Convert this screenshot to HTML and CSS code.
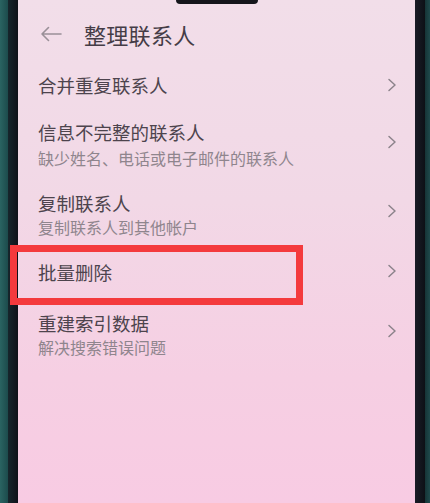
FILE: index.html
```html
<!DOCTYPE html>
<html lang="zh-CN">
<head>
<meta charset="utf-8">
<title>整理联系人</title>
<link rel="stylesheet" href="styles.css">
</head>
<body>
<div class="phone">
  <div class="bezel-left"><div class="edge-teal"></div><div class="edge-dark"></div></div>
  <div class="screen">
    <div class="notch"></div>
    <div class="header">
      <svg class="back" viewBox="0 0 22 16" width="22" height="16"><path d="M21 8H2M8.5 1.5L2 8l6.5 6.5" fill="none" stroke="#9a9098" stroke-width="1.6" stroke-linecap="round" stroke-linejoin="round"/></svg>
      <span class="title">整理联系人</span>
    </div>
    <div class="row r1">
      <div class="texts"><div class="name">合并重复联系人</div></div>
      <svg class="chev" viewBox="0 0 10 14" width="10" height="14"><path d="M2 1.5L8 7l-6 5.5" fill="none" stroke="#8c838b" stroke-width="1.5" stroke-linecap="round" stroke-linejoin="round"/></svg>
    </div>
    <div class="row r2">
      <div class="texts"><div class="name">信息不完整的联系人</div><div class="sub">缺少姓名、电话或电子邮件的联系人</div></div>
      <svg class="chev" viewBox="0 0 10 14" width="10" height="14"><path d="M2 1.5L8 7l-6 5.5" fill="none" stroke="#8c838b" stroke-width="1.5" stroke-linecap="round" stroke-linejoin="round"/></svg>
    </div>
    <div class="row r3">
      <div class="texts"><div class="name">复制联系人</div><div class="sub">复制联系人到其他帐户</div></div>
      <svg class="chev" viewBox="0 0 10 14" width="10" height="14"><path d="M2 1.5L8 7l-6 5.5" fill="none" stroke="#8c838b" stroke-width="1.5" stroke-linecap="round" stroke-linejoin="round"/></svg>
    </div>
    <div class="row r4">
      <div class="highlight"></div>
      <div class="texts"><div class="name">批量删除</div></div>
      <svg class="chev" viewBox="0 0 10 14" width="10" height="14"><path d="M2 1.5L8 7l-6 5.5" fill="none" stroke="#8c838b" stroke-width="1.5" stroke-linecap="round" stroke-linejoin="round"/></svg>
    </div>
    <div class="row r5">
      <div class="texts"><div class="name">重建索引数据</div><div class="sub">解决搜索错误问题</div></div>
      <svg class="chev" viewBox="0 0 10 14" width="10" height="14"><path d="M2 1.5L8 7l-6 5.5" fill="none" stroke="#8c838b" stroke-width="1.5" stroke-linecap="round" stroke-linejoin="round"/></svg>
    </div>
  </div>
  <div class="bezel-right"><div class="edge-dark"></div><div class="edge-teal2"></div></div>
</div>
</body>
</html>
```
FILE: styles.css
```css
html, body {
  margin: 0;
  padding: 0;
  width: 430px;
  height: 503px;
  overflow: hidden;
  background: #12171f;
}
.phone {
  display: flex;
  width: 430px;
  height: 503px;
  font-family: "Noto Sans CJK SC", "Noto Sans", sans-serif;
}
.bezel-left, .bezel-right {
  display: flex;
  height: 100%;
}
.edge-teal {
  width: 8px;
  background: linear-gradient(90deg, #2a6462, #1c4b4c);
}
.edge-dark {
  width: 10px;
  background: linear-gradient(90deg, #16262c, #0f1219);
}
.bezel-right .edge-dark {
  background: linear-gradient(90deg, #1a1c26, #0d1016);
}
.edge-teal2 {
  width: 5px;
  background: linear-gradient(90deg, #163436, #1f4a4c);
}
.screen {
  position: relative;
  width: 397px;
  height: 100%;
  background: linear-gradient(180deg, #f2dee9 0%, #f2d8e6 40%, #f6cfe3 75%, #f8cbe3 100%);
  padding: 0 18px 0 20px;
  box-sizing: border-box;
}
.notch {
  position: absolute;
  top: 0;
  left: 158px;
  width: 82px;
  height: 4px;
  background: #15151b;
  border-radius: 0 0 10px 10px;
}
.header {
  height: 60px;
  display: flex;
  align-items: center;
  padding-top: 8px;
  box-sizing: border-box;
}
.back {
  margin-left: 2px;
  margin-right: 22px;
}
.title {
  font-size: 22px;
  color: #453c46;
  font-weight: 400;
  letter-spacing: 0.3px;
}
.row {
  position: relative;
  display: flex;
  align-items: center;
  justify-content: space-between;
}
.r1 { height: 50px; }
.r2 { height: 68px; }
.r3 { height: 72px; }
.r4 { height: 44px; }
.r5 { height: 80px; }
.name {
  font-size: 18.5px;
  line-height: 25px;
  color: #4d444d;
}
.sub {
  font-size: 16px;
  line-height: 22px;
  color: #8f858d;
}
.r2 .sub { margin-top: 2px; }
.chev {
  flex: none;
  margin-right: 0;
}
.r2 .chev { margin-top: -4px; }
.r3 .chev { margin-top: -6px; }
.r4 .chev { margin-top: -2px; }
.r5 .chev { margin-top: -6px; }
.highlight {
  position: absolute;
  left: -28px;
  top: -5px;
  width: 293px;
  height: 60px;
  border: 7px solid #f43a3d;
  box-sizing: border-box;
}
```
